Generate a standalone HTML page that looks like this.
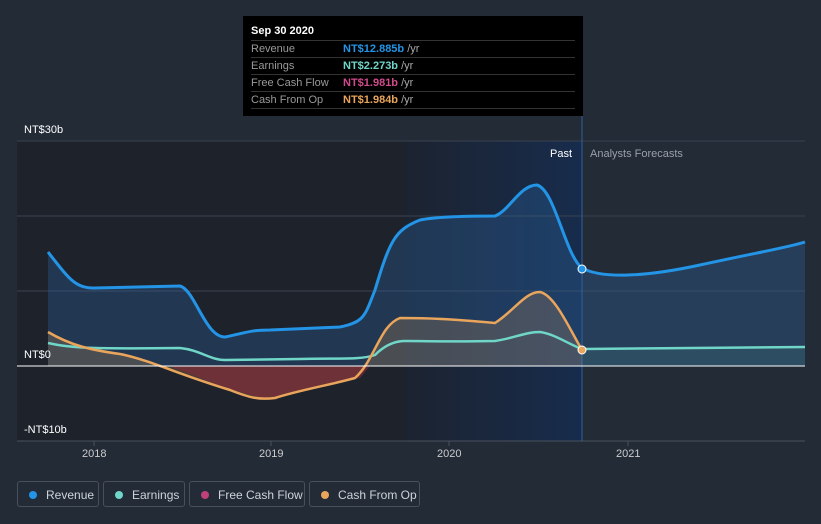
<!DOCTYPE html>
<html><head><style>
body{margin:0;background:#232b37;font-family:"Liberation Sans",sans-serif;width:821px;height:524px;overflow:hidden;position:relative}
.tt{position:absolute;left:243px;top:16px;width:340px;height:100px;background:#000;color:#fff;font-size:11px}
.tt .h{position:absolute;left:8px;top:9px;font-weight:bold}
.row{position:absolute;left:8px;width:324px;border-top:1px solid #333;height:16px;line-height:16px;color:#999}
.row span{position:absolute;left:92px;font-weight:bold}
.row i{font-style:normal;color:#aaa;font-weight:normal}
.lg{position:absolute;top:481px;height:26px;border:1px solid #4a505b;border-radius:3px;color:#cfd3d9;font-size:12px;line-height:26px;box-sizing:border-box}
.lg b{position:absolute;left:11px;top:9px;width:8px;height:8px;border-radius:50%}
.lg span{position:absolute;left:28px}
.ax{position:absolute;color:#fff;font-size:11px}
</style></head><body>
<svg width="821" height="524" style="position:absolute;left:0;top:0">
<defs><linearGradient id="hg" x1="0" x2="1" y1="0" y2="0"><stop offset="0" stop-color="#1c2330"/><stop offset="1" stop-color="#172c4c"/></linearGradient></defs>
<rect x="17" y="141" width="387" height="300" fill="#1d222b"/>
<rect x="404" y="141" width="178" height="300" fill="url(#hg)"/>
<g stroke="#3a4250" stroke-width="1"><line x1="17" y1="141" x2="805" y2="141"/><line x1="17" y1="216" x2="805" y2="216"/><line x1="17" y1="291" x2="805" y2="291"/><line x1="17" y1="441" x2="805" y2="441" stroke="#4a515e"/></g>
<g stroke="#4a515e"><line x1="94" y1="441" x2="94" y2="446"/><line x1="271" y1="441" x2="271" y2="446"/><line x1="449" y1="441" x2="449" y2="446"/><line x1="628" y1="441" x2="628" y2="446"/></g>
<line x1="582" y1="110" x2="582" y2="441" stroke="#2f5f9c" stroke-width="1"/>
<path d="M48,252 C70,280 75,288 95,288 L180,286 C195,290 205,337 225,337 C245,333 250,330 270,330 L340,327 C365,322 365,315 375,290 C390,240 395,230 420,220 C440,216 480,216 495,216 C510,210 520,185 537,185 C555,190 565,255 582,268 C600,278 640,278 700,265 C760,252 790,247 805,242 L805,366 L48,366Z" fill="#2d6aa8" opacity="0.3"/>
<path d="M582,349 L805,347 L805,366 L582,366Z" fill="#6fd6c8" opacity="0.1"/>
<path d="M48,252 C70,280 75,288 95,288 L180,286 C195,290 205,337 225,337 C245,333 250,330 270,330 L340,327 C365,322 365,315 375,290 C390,240 395,230 420,220 C440,216 480,216 495,216 C510,210 520,185 537,185 C555,190 565,255 582,268 C600,278 640,278 700,265 C760,252 790,247 805,242" fill="none" stroke="#2394e6" stroke-width="3"/>
<path d="M48,332 C70,345 90,350 120,354 C150,360 180,375 230,390 C250,398 260,400 275,398 C300,390 330,385 355,378 C375,360 380,325 400,318 C430,318 450,319 495,323 C515,310 525,292 540,292 C555,295 570,330 582,350 L582,366 L48,366Z" fill="#e9a55b" opacity="0.2"/>
<path d="M170,366 C200,378 240,395 270,399 C300,390 330,385 360,378 L370,366Z" fill="#8a2a3c" opacity="0.6"/>
<path d="M48,343 C70,348 90,349 180,348 C200,350 210,360 225,360 L300,359 C340,358 360,360 375,355 C385,345 395,341 405,341 C430,341 450,342 495,341 C515,338 525,332 540,332 C555,334 570,345 582,349 L805,347" fill="none" stroke="#6fd6c8" stroke-width="2.5"/>
<path d="M48,332 C70,345 90,350 120,354 C150,360 180,375 230,390 C250,398 260,400 275,398 C300,390 330,385 355,378 C375,360 380,325 400,318 C430,318 450,319 495,323 C515,310 525,292 540,292 C555,295 570,330 582,350" fill="none" stroke="#e9a55b" stroke-width="2.5"/>
<line x1="17" y1="366" x2="805" y2="366" stroke="#fff" stroke-width="1"/>
<circle cx="582" cy="269" r="4" fill="#2394e6" stroke="#fff" stroke-width="1"/>
<circle cx="582" cy="350" r="4" fill="#e9a55b" stroke="#fff" stroke-width="1"/>
</svg>
<div class="ax" style="left:24px;top:124px">NT$30b</div>
<div class="ax" style="left:24px;top:349px">NT$0</div>
<div class="ax" style="left:24px;top:424px">-NT$10b</div>
<div class="ax" style="left:550px;top:148px">Past</div>
<div class="ax" style="left:590px;top:148px;color:#9aa0a8">Analysts Forecasts</div>
<div class="ax" style="left:82px;top:448px;color:#ccc">2018</div>
<div class="ax" style="left:259px;top:448px;color:#ccc">2019</div>
<div class="ax" style="left:437px;top:448px;color:#ccc">2020</div>
<div class="ax" style="left:616px;top:448px;color:#ccc">2021</div>
<div class="tt"><div class="h">Sep 30 2020</div>
<div class="row" style="top:24px">Revenue<span style="color:#2394e6">NT$12.885b <i>/yr</i></span></div>
<div class="row" style="top:41px">Earnings<span style="color:#6fd6c8">NT$2.273b <i>/yr</i></span></div>
<div class="row" style="top:58px">Free Cash Flow<span style="color:#d14b8c">NT$1.981b <i>/yr</i></span></div>
<div class="row" style="top:75px;border-bottom:1px solid #333">Cash From Op<span style="color:#e9a55b">NT$1.984b <i>/yr</i></span></div>
</div>
<div class="lg" style="left:17px;width:82px"><b style="background:#2394e6"></b><span>Revenue</span></div>
<div class="lg" style="left:103px;width:82px"><b style="background:#6fd6c8"></b><span>Earnings</span></div>
<div class="lg" style="left:189px;width:116px"><b style="background:#c0407c"></b><span>Free Cash Flow</span></div>
<div class="lg" style="left:309px;width:111px"><b style="background:#e9a55b"></b><span>Cash From Op</span></div>
</body></html>
